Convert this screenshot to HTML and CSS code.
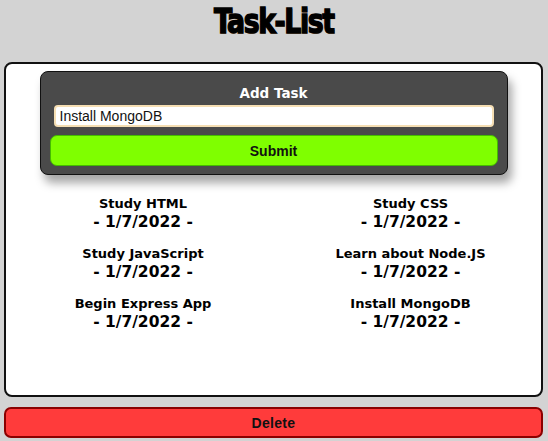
FILE: index.html
```html
<!DOCTYPE html>
<html>
<head>
<meta charset="utf-8">
<link rel="stylesheet" href="styles.css">
</head>
<body>
<h1 class="title"><span class="title-text">Task-List</span></h1>
<main class="board">
  <form class="add-form">
    <div class="add-label">Add Task</div>
    <input class="add-input" type="text" value="Install MongoDB">
    <button class="submit-btn" type="button">Submit</button>
  </form>
  <div class="tasks">
    <div class="task"><div class="task-name">Study HTML</div><div class="task-date">- 1/7/2022 -</div></div>
    <div class="task"><div class="task-name">Study CSS</div><div class="task-date">- 1/7/2022 -</div></div>
    <div class="task"><div class="task-name">Study JavaScript</div><div class="task-date">- 1/7/2022 -</div></div>
    <div class="task"><div class="task-name">Learn about Node.JS</div><div class="task-date">- 1/7/2022 -</div></div>
    <div class="task"><div class="task-name">Begin Express App</div><div class="task-date">- 1/7/2022 -</div></div>
    <div class="task"><div class="task-name">Install MongoDB</div><div class="task-date">- 1/7/2022 -</div></div>
  </div>
</main>
<button class="delete-btn" type="button">Delete</button>
</body>
</html>
```
FILE: styles.css
```css
html, body {
  margin: 0;
  padding: 0;
}
body {
  background: #d3d3d3;
  padding: 0 5px 0 4px;
  font-family: "DejaVu Sans", Verdana, sans-serif;
  height: 441px;
  box-sizing: border-box;
  overflow: hidden;
}
.title {
  margin: 0;
  height: 62px;
  padding-top: 2px;
  box-sizing: border-box;
  text-align: center;
  font-family: "DejaVu Sans", sans-serif;
  font-stretch: condensed;
  font-weight: 900;
  font-size: 34px;
  line-height: 38px;
  letter-spacing: -1.5px;
  color: #000;
}
.title-text {
  display: inline-block;
  transform: scaleX(0.87);
  -webkit-text-stroke: 1.4px #000;
  text-shadow: 1px 1px 0 rgba(200, 120, 40, 0.6);
}
.board {
  display: block;
  height: 335px;
  box-sizing: border-box;
  background: #fff;
  border: 2px solid #111;
  border-radius: 8px;
  padding-top: 7px;
}
.add-form {
  width: 468px;
  height: 104px;
  box-sizing: border-box;
  margin: 0 auto;
  background: #4a4a4a;
  border: 1px solid #111;
  border-radius: 8px;
  box-shadow: 4px 8px 10px rgba(0,0,0,0.35);
  padding: 11px 9px 0;
  display: flex;
  flex-direction: column;
}
.add-label {
  color: #fff;
  text-align: center;
  font-weight: bold;
  font-size: 13.5px;
  line-height: 20px;
  height: 22px;
}
.add-input {
  margin: 0 4px;
  height: 22px;
  box-sizing: border-box;
  border: 2px solid #f5deb3;
  border-radius: 4px;
  background: #fff;
  padding: 0 4px;
  font-family: "Liberation Sans", Arial, sans-serif;
  font-size: 14px;
  color: #111;
  outline: none;
}
.submit-btn {
  margin-top: 8px;
  height: 31px;
  box-sizing: border-box;
  background: #7fff00;
  border: 1px solid #44bb00;
  border-radius: 7px;
  font-family: "Liberation Sans", Arial, sans-serif;
  font-weight: bold;
  font-size: 14px;
  color: #111;
  padding: 0;
}
.tasks {
  display: grid;
  grid-template-columns: 274px 1fr;
  row-gap: 13px;
  margin-top: 20px;
}
.task {
  text-align: center;
  color: #000;
  font-weight: bold;
}
.task-name {
  font-size: 13px;
  line-height: 17px;
}
.task-date {
  font-size: 15.5px;
  line-height: 20px;
}
.delete-btn {
  display: block;
  width: 100%;
  margin-top: 10px;
  height: 31px;
  box-sizing: border-box;
  background: #ff3b3b;
  border: 2px solid #8b0000;
  border-radius: 7px;
  font-family: "Liberation Sans", Arial, sans-serif;
  font-weight: bold;
  font-size: 14px;
  letter-spacing: 0.3px;
  color: #111;
  padding: 0;
}
```
